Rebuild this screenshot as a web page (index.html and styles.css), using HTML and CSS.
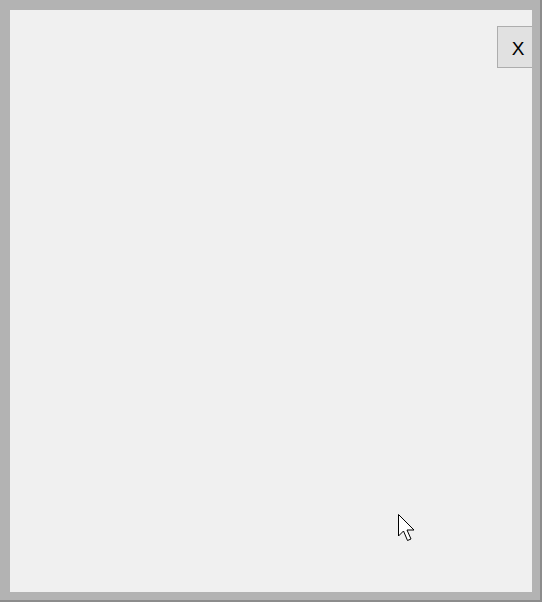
FILE: index.html
```html
<!DOCTYPE html>
<html lang="en">
<head>
  <meta charset="UTF-8" />
  <meta name="viewport" content="width=device-width, initial-scale=1.0"/>
  <title>Dialog</title>
  <link rel="stylesheet" href="styles.css">
</head>
<body>

  <div class="window">
    <div class="panel">
      <button class="close-btn">X</button>
    </div>
  </div>

  <!-- mouse pointer -->
  <svg class="cursor" width="18" height="28" viewBox="0 0 18 28">
    <path d="M0.5 0.5 L0.5 22 L5.5 17 L9.5 26.5 L13 25 L9 16 L16 16 Z" fill="#fff" stroke="#000" stroke-width="1" stroke-linejoin="miter"/>
  </svg>

</body>
</html>
```

FILE: styles.css
```css
* {
  box-sizing: border-box;
  margin: 0;
  padding: 0;
}

body {
  width: 542px;
  height: 602px;
  position: relative;
  font-family: "Liberation Sans", Arial, sans-serif;
  background: #f0f0f0;
}

.window {
  width: 542px;
  height: 602px;
  background: #b3b3b3;
  padding: 10px 8px 8px 10px;
  border-right: 2px solid #8c8c8c;
  border-bottom: 2px solid #8c8c8c;
}

.panel {
  height: 100%;
  background: #f0f0f0;
  display: flex;
  justify-content: flex-end;
  align-items: flex-start;
  padding-top: 16px;
  overflow: hidden;
}

.close-btn {
  width: 42px;
  height: 42px;
  margin-right: -7px;
  padding-top: 3px;
  background: #e1e1e1;
  border: 1px solid #adadad;
  font-family: "Liberation Sans", Arial, sans-serif;
  font-size: 19px;
  color: #000;
  cursor: pointer;
}

.cursor {
  position: absolute;
  left: 398px;
  top: 514px;
}
```
